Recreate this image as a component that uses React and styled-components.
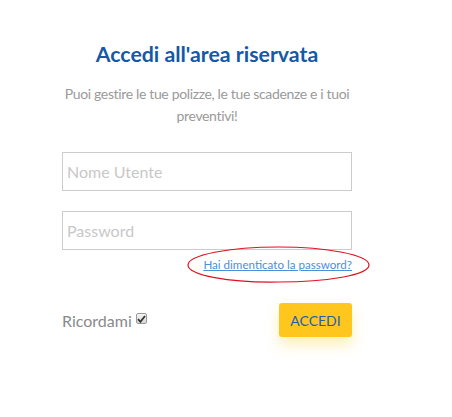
import React from "react";
import styled, { createGlobalStyle } from "styled-components";

const Global = createGlobalStyle`
  html, body { margin: 0; padding: 0; background: #fff; }
  body { font-family: "Lato", "Open Sans", sans-serif; }
  * { box-sizing: border-box; }
`;

const Page = styled.div`
  width: 452px;
  height: 417px;
  padding: 40px 0 0 62px;
`;

const Panel = styled.form`
  width: 290px;
  display: flex;
  flex-direction: column;
`;

const Title = styled.h1`
  margin: 0;
  text-align: center;
  font-size: 21.3px;
  line-height: 28px;
  font-weight: 700;
  color: #1559a6;
`;

const Subtitle = styled.p`
  margin: 15px 0 0;
  text-align: center;
  font-size: 14px;
  letter-spacing: -0.35px;
  line-height: 22px;
  color: #9a9a9a;
`;

const Field = styled.input`
  width: 290px;
  height: 39px;
  border: 1px solid #cccccc;
  padding: 0 4px;
  font-family: inherit;
  font-size: 16px;
  color: #555;
  outline: none;
  margin-top: ${(p) => p.$gap}px;
  &::placeholder { color: #c8c8c8; }
`;

const LinkRow = styled.div`
  position: relative;
  display: flex;
  justify-content: flex-end;
  margin-top: 7px;
`;

const ForgotLink = styled.a`
  font-size: 11.6px;
  line-height: 16px;
  color: #4a8fd8;
  text-decoration: underline;
`;

const Annotation = styled.svg`
  position: absolute;
  left: 125px;
  top: -11px;
  overflow: visible;
`;

const Actions = styled.div`
  display: flex;
  justify-content: space-between;
  align-items: center;
  margin-top: 30px;
`;

const Remember = styled.label`
  display: flex;
  align-items: center;
  gap: 4px;
  font-size: 16px;
  color: #8a8a8a;
`;

const Check = styled.span`
  width: 11px;
  height: 11px;
  border: 1px solid #9a9a9a;
  border-radius: 2px;
  background: linear-gradient(#f4f4f4, #d8d8d8);
  display: flex;
  align-items: center;
  justify-content: center;
  margin-top: -3px;
`;

const Submit = styled.button`
  width: 73px;
  height: 34px;
  border: none;
  border-radius: 3px;
  background: #ffc61e;
  color: #1d5fb0;
  font-family: inherit;
  font-size: 14px;
  box-shadow: 0 8px 14px rgba(255, 210, 60, 0.35);
  cursor: pointer;
`;

export default function App() {
  return (
    <>
      <Global />
      <Page>
        <Panel onSubmit={(e) => e.preventDefault()}>
          <Title>Accedi all'area riservata</Title>
          <Subtitle>Puoi gestire le tue polizze, le tue scadenze e i tuoi preventivi!</Subtitle>
          <Field $gap={25} placeholder="Nome Utente" />
          <Field $gap={20} type="password" placeholder="Password" />
          <LinkRow>
            <ForgotLink href="#">Hai dimenticato la password?</ForgotLink>
            <Annotation width="184" height="38" viewBox="0 0 184 38">
              <path
                d="M92 1 C140 1 182 9 182 19 C182 29 140 36 92 36 C42 37 1 29 1 19 C1 9 42 1 92 1 Z"
                fill="none"
                stroke="#e0101e"
                strokeWidth="1.2"
              />
            </Annotation>
          </LinkRow>
          <Actions>
            <Remember>
              Ricordami
              <Check>
                <svg width="9" height="8" viewBox="0 0 9 8">
                  <path d="M1 4.2 L3.4 6.8 L8 1" fill="none" stroke="#333" strokeWidth="1.8" />
                </svg>
              </Check>
            </Remember>
            <Submit type="submit">ACCEDI</Submit>
          </Actions>
        </Panel>
      </Page>
    </>
  );
}
